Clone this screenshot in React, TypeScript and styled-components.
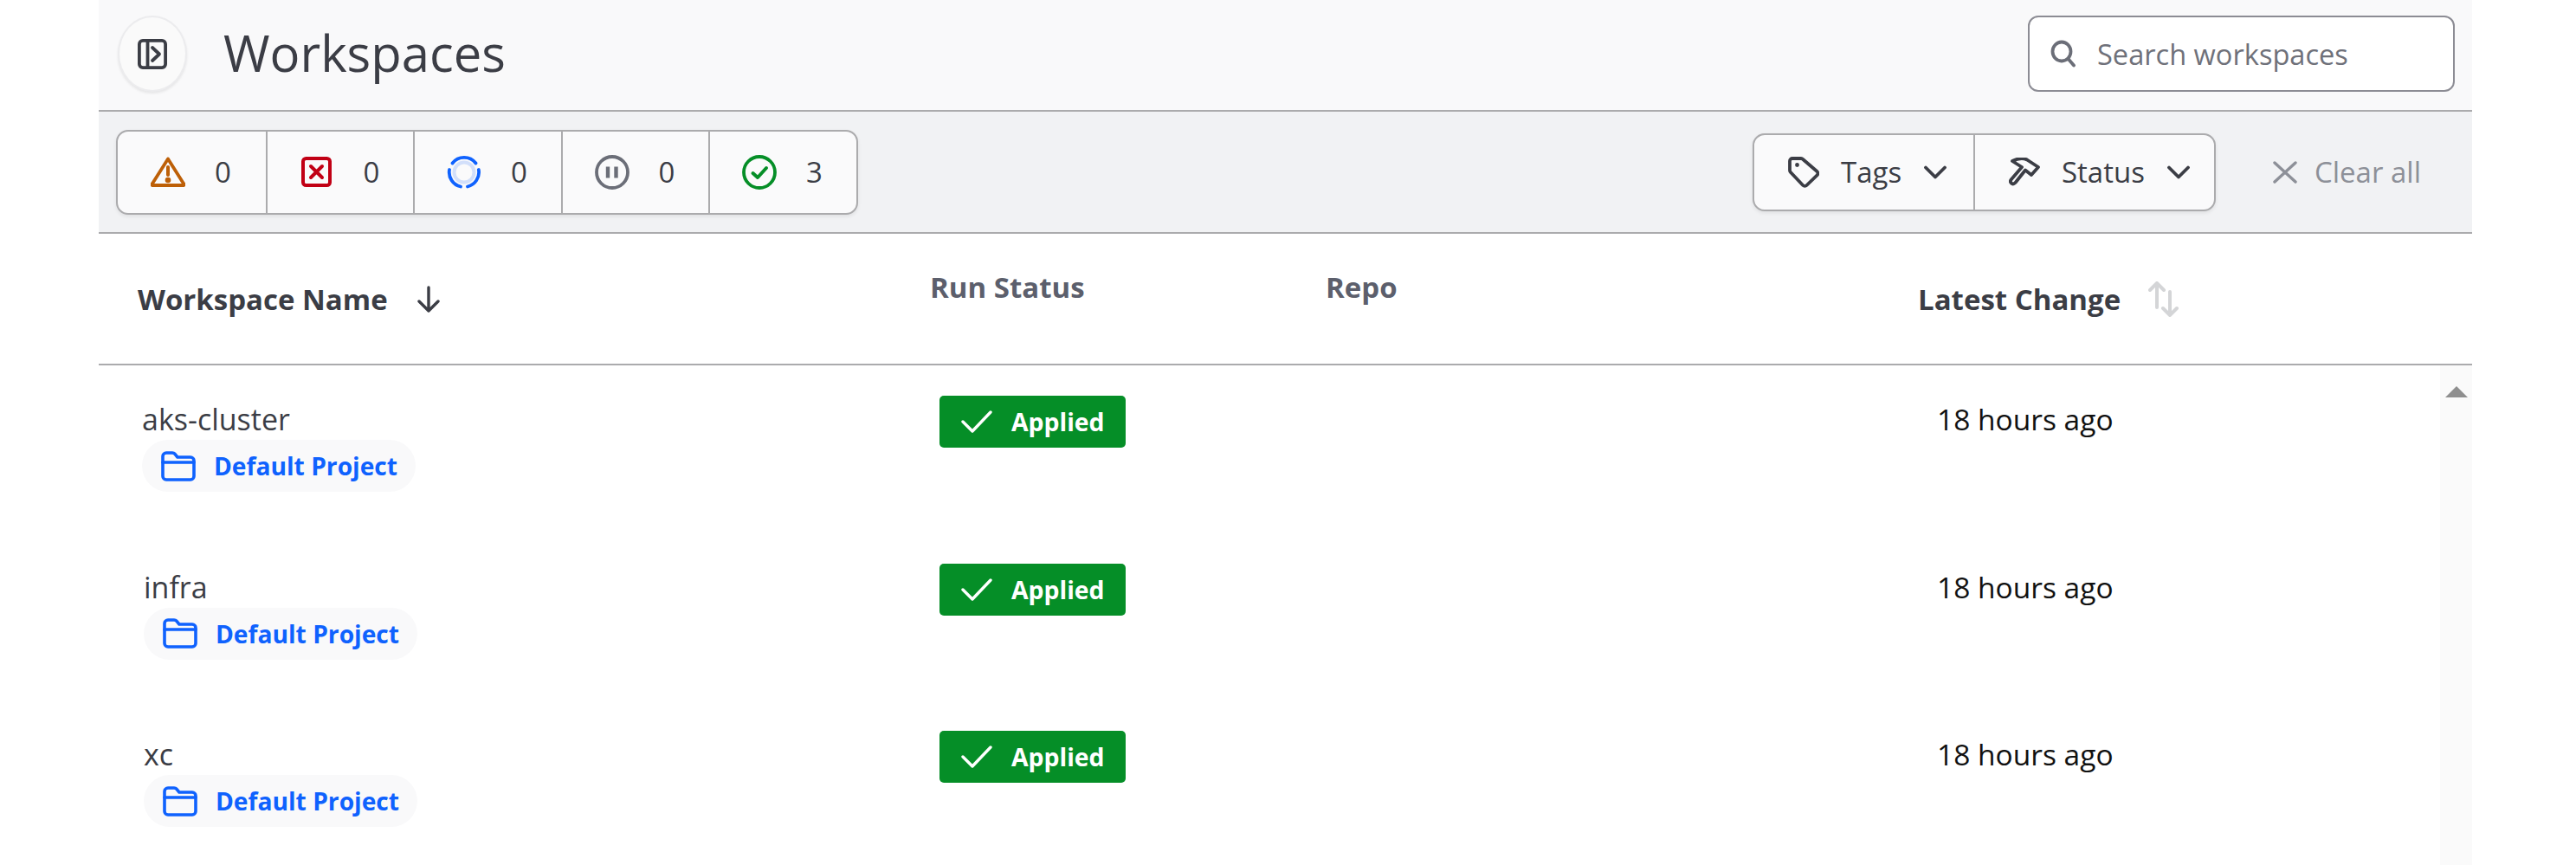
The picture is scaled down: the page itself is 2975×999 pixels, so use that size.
import React from 'react';
import styled, { createGlobalStyle } from 'styled-components';

const Global = createGlobalStyle`
  html, body { margin: 0; padding: 0; background: #fff; }
  body { font-family: "Open Sans", "Noto Sans", "Liberation Sans", sans-serif; color: #3b3d45; }
`;
const Page = styled.div`
  height: 999px;
  overflow: hidden;
  padding: 0 120px 0 114px;
  box-sizing: border-box;
`;
const Header = styled.header`
  height: 129px;
  box-sizing: border-box;
  border-bottom: 2px solid #ababad;
  background: #f9f9fa;
  display: flex;
  align-items: center;
  padding: 0 20px 3px 22px;
`;
const RoundButton = styled.button`
  width: 80px;
  height: 88px;
  padding: 0;
  border: 2px solid #ececee;
  border-radius: 50%;
  background: #fafafa;
  box-shadow: 0 2px 3px rgba(0,0,0,.08);
  display: flex;
  align-items: center;
  justify-content: center;
`;
const Title = styled.h1`
  margin: -2px 0 0 42px;
  font-size: 58px;
  line-height: 72px;
  font-weight: 500;
  color: #3b3d45;
  flex: 1;
`;
const SearchBox = styled.div`
  width: 493px;
  height: 88px;
  box-sizing: border-box;
  border: 2px solid #8c8c94;
  border-radius: 12px;
  background: #fff;
  display: flex;
  align-items: center;
  gap: 24px;
  padding-left: 24px;
  font-size: 32.6px;
  color: #6f717a;
`;
const FilterBar = styled.div`
  height: 141px;
  box-sizing: border-box;
  border-bottom: 2px solid #ababad;
  background: #f1f2f4;
  display: flex;
  align-items: center;
  justify-content: space-between;
  padding: 0 59px 0 20px;
`;
const Group = styled.div<{ $height: number }>`
  display: flex;
  height: ${p => p.$height}px;
  box-sizing: border-box;
  border: 2px solid #ababad;
  border-radius: 14px;
  background: #fafafb;
  box-shadow: 0 2px 4px rgba(0,0,0,.08);
`;
const CountCell = styled.div`
  width: 170.5px;
  box-sizing: border-box;
  display: flex;
  align-items: center;
  gap: 33px;
  padding-left: 37px;
  font-size: 33px;
  color: #3b3d45;
  & + & { border-left: 2px solid #ababad; padding-left: 36px; }
`;
const RightSide = styled.div`
  display: flex;
  align-items: center;
  gap: 66px;
`;
const DropCell = styled.div<{ $width: number }>`
  width: ${p => p.$width}px;
  box-sizing: border-box;
  display: flex;
  align-items: center;
  padding-left: 39px;
  font-size: 33px;
  color: #3b3d45;
  & + & { border-left: 2px solid #ababad; }
  & > span { margin: 0 26px 0 25px; }
`;
const ClearAll = styled.div`
  display: flex;
  align-items: center;
  gap: 20px;
  font-size: 33px;
  color: #8d9098;
`;
const HeadRow = styled.div`
  height: 152px;
  box-sizing: border-box;
  border-bottom: 2px solid #ababad;
  display: grid;
  grid-template-columns: 960px 457px 684px 1fr;
  padding-top: 40px;
`;
const HeadCell = styled.div<{ $muted?: boolean }>`
  display: flex;
  align-items: center;
  align-self: start;
  height: 70px;
  font-size: 33px;
  font-weight: 700;
  color: ${p => (p.$muted ? '#5c5f6c' : '#3b3d45')};
  margin-top: ${p => (p.$muted ? '-14px' : '0')};
`;
const NameHead = styled(HeadCell)`
  padding-left: 45px;
  gap: 34px;
`;
const SortHead = styled(HeadCell)`
  gap: 32px;
`;
const Body = styled.div`
  display: flex;
  height: 577px;
`;
const Rows = styled.div`
  flex: 1;
`;
const Row = styled.div`
  height: 193.5px;
  display: grid;
  grid-template-columns: 960px 457px 684px 1fr;
  padding-top: 38px;
  box-sizing: border-box;
`;
const NameCell = styled.div<{ $first?: boolean }>`
  padding-left: ${p => (p.$first ? 50 : 52)}px;
`;
const Name = styled.div`
  font-size: 34px;
  line-height: 48px;
  color: #3b3d45;
`;
const ProjectPill = styled.div`
  display: inline-flex;
  align-items: center;
  gap: 21px;
  height: 60px;
  padding: 0 21px 0 22px;
  border-radius: 30px;
  background: #f9f9fa;
  font-size: 28.2px;
  font-weight: 700;
  color: #0f62fe;
`;
const StatusCell = styled.div`
  padding-left: 11px;
  grid-column: 2 / 4;
  margin-top: -3px;
`;
const Badge = styled.div`
  display: inline-flex;
  align-items: center;
  gap: 22px;
  width: 215px;
  height: 60px;
  box-sizing: border-box;
  padding-left: 25px;
  border-radius: 5px;
  background: #058e27;
  color: #fff;
  font-size: 28.4px;
  font-weight: 700;
`;
const TimeCell = styled.div`
  padding-left: 22px;
  font-size: 33.5px;
  line-height: 48px;
  color: #111;
`;
const Scrollbar = styled.div`
  width: 37px;
  flex: none;
  background: #fafafa;
  display: flex;
  justify-content: center;
  padding-top: 24px;
  box-sizing: border-box;
`;
const ScrollArrow = styled.div`
  width: 0;
  height: 0;
  border-left: 13px solid transparent;
  border-right: 13px solid transparent;
  border-bottom: 13px solid #8f8f8f;
`;

const SidebarIcon = () => (
  <svg width="34" height="35" viewBox="0 0 34 35" fill="none" stroke="#3b3d45" strokeWidth="3.8" strokeLinecap="round" strokeLinejoin="round">
    <rect x="1.9" y="1.9" width="30.2" height="31.2" rx="4" />
    <path d="M11.5 2v31M17 10l8 7.5-8 7.5" />
  </svg>
);
const SearchIcon = () => (
  <svg width="30" height="32" viewBox="0 0 30 32" fill="none" stroke="#6b6e78" strokeWidth="3.8" strokeLinecap="round">
    <ellipse cx="13" cy="13.5" rx="10.5" ry="11" />
    <path d="M21 22.5l6 7" />
  </svg>
);
const IconBox = styled.span`
  width: 42px;
  flex: none;
  display: flex;
  justify-content: center;
`;
const WarnIcon = () => (
  <svg width="40" height="35" viewBox="0 0 40 35" fill="none" stroke="#bd5f07" strokeWidth="3.8" strokeLinejoin="round" strokeLinecap="round">
    <path d="M20 2.4L38 31a1 1 0 0 1-1 2H3a1 1 0 0 1-1-2z" />
    <path d="M20 12v9" strokeWidth="4" />
    <circle cx="20" cy="27" r="1.4" fill="#bd5f07" />
  </svg>
);
const ErrorIcon = () => (
  <svg width="35" height="35" viewBox="0 0 35 35" fill="none" stroke="#c10015" strokeWidth="4" strokeLinecap="round">
    <rect x="2" y="2" width="31" height="31" rx="3.5" />
    <path d="M11 11l13 13M24 11L11 24" />
  </svg>
);
const SpinnerIcon = () => (
  <svg width="40" height="40" viewBox="0 0 40 40" fill="none" strokeLinecap="round">
    <circle cx="20" cy="20" r="11.5" stroke="#d2dffa" strokeWidth="4" />
    <path d="M6.5 9.5A17 17 0 0 1 33.5 9.5M36.8 17A17 17 0 0 1 24 36.5M16 36.5A17 17 0 0 1 3 17" stroke="#0f62fe" strokeWidth="3.8" />
  </svg>
);
const PauseIcon = () => (
  <svg width="40" height="40" viewBox="0 0 40 40" fill="none" stroke="#6b6e78" strokeWidth="3.8">
    <circle cx="20" cy="20" r="18" />
    <path d="M15 13.5v13M24.5 13.5v13" strokeWidth="4.4" />
  </svg>
);
const OkIcon = () => (
  <svg width="40" height="40" viewBox="0 0 40 40" fill="none" stroke="#058e27" strokeWidth="3.8" strokeLinecap="round" strokeLinejoin="round">
    <circle cx="20" cy="20" r="18" />
    <path d="M12.5 21l5.5 5 10-11" strokeWidth="4" />
  </svg>
);
const TagIcon = () => (
  <svg width="36" height="36" viewBox="0 0 36 36" fill="none" stroke="#3b3d45" strokeWidth="3.8" strokeLinejoin="round">
    <path d="M2 5a3 3 0 0 1 3-3h10a3 3 0 0 1 2.2 1L33.5 17a3 3 0 0 1 0 4.3L21.5 33a3 3 0 0 1-4.3 0L3 18a3 3 0 0 1-1-2.3z" />
    <circle cx="10.5" cy="9.5" r="2.4" fill="#3b3d45" stroke="none" />
  </svg>
);
const HammerIcon = () => (
  <svg width="36" height="33" viewBox="0 0 36 33" fill="none" stroke="#3b3d45" strokeWidth="3.8" strokeLinejoin="round" strokeLinecap="round">
    <path d="M4 4C10 1 16 0 21 2.5L34 11 26 20 19 14.5 7.5 29Q5 31.5 2.8 29.5 0.8 27.5 3 25L15 11Z" />
  </svg>
);
const Chevron = () => (
  <svg width="26" height="16" viewBox="0 0 26 16" fill="none" stroke="#3b3d45" strokeWidth="3.8" strokeLinecap="round" strokeLinejoin="round">
    <path d="M2 2.5l11 11 11-11" />
  </svg>
);
const CloseIcon = () => (
  <svg width="28" height="26" viewBox="0 0 28 26" fill="none" stroke="#8d9098" strokeWidth="3.4" strokeLinecap="round">
    <path d="M2 2l24 22M26 2L2 24" />
  </svg>
);
const ArrowDown = () => (
  <svg width="26" height="31" viewBox="0 0 26 31" fill="none" stroke="#3b3d45" strokeWidth="3.4" strokeLinecap="round" strokeLinejoin="round">
    <path d="M13 2v27M2 18l11 11 11-11" />
  </svg>
);
const SortIcon = () => (
  <svg width="35" height="41" viewBox="0 0 35 41" fill="none" stroke="#d4d5d7" strokeWidth="4" strokeLinecap="round" strokeLinejoin="round">
    <path d="M10 2v28M2 10l8-8 8 8M25 12v27M17 31l8 8 8-8" />
  </svg>
);
const FolderIcon = () => (
  <svg width="40" height="35" viewBox="0 0 40 35" fill="none" stroke="#0f62fe" strokeWidth="3.6" strokeLinejoin="round" strokeLinecap="round">
    <path d="M2 6a4 4 0 0 1 4-4h7a4 4 0 0 1 3 1.3L19 7h15a4 4 0 0 1 4 4v18a4 4 0 0 1-4 4H6a4 4 0 0 1-4-4z" />
    <path d="M2 13h36" />
  </svg>
);
const CheckMark = () => (
  <svg width="36" height="26" viewBox="0 0 36 26" fill="none" stroke="#fff" strokeWidth="3.4" strokeLinecap="round" strokeLinejoin="round">
    <path d="M2 13l11 11L34 2" />
  </svg>
);

const counts = [
  { icon: <WarnIcon />, n: 0 },
  { icon: <ErrorIcon />, n: 0 },
  { icon: <SpinnerIcon />, n: 0 },
  { icon: <PauseIcon />, n: 0 },
  { icon: <OkIcon />, n: 3 },
];
const workspaces = ['aks-cluster', 'infra', 'xc'];

export default function App() {
  return (
    <Page>
      <Global />
      <Header>
        <RoundButton><SidebarIcon /></RoundButton>
        <Title>Workspaces</Title>
        <SearchBox><SearchIcon />Search workspaces</SearchBox>
      </Header>
      <FilterBar>
        <Group $height={98}>
          {counts.map((c, i) => (
            <CountCell key={i}>
              <IconBox>{c.icon}</IconBox>
              {c.n}
            </CountCell>
          ))}
        </Group>
        <RightSide>
          <Group $height={90}>
            <DropCell $width={253}><TagIcon /><span>Tags</span><Chevron /></DropCell>
            <DropCell $width={278}><HammerIcon /><span>Status</span><Chevron /></DropCell>
          </Group>
          <ClearAll><CloseIcon />Clear all</ClearAll>
        </RightSide>
      </FilterBar>
      <HeadRow>
        <NameHead>Workspace Name<ArrowDown /></NameHead>
        <HeadCell $muted>Run Status</HeadCell>
        <HeadCell $muted>Repo</HeadCell>
        <SortHead>Latest Change<SortIcon /></SortHead>
      </HeadRow>
      <Body>
        <Rows>
          {workspaces.map((w, i) => (
            <Row key={w}>
              <NameCell $first={i === 0}>
                <Name>{w}</Name>
                <ProjectPill><FolderIcon />Default Project</ProjectPill>
              </NameCell>
              <StatusCell><Badge><CheckMark />Applied</Badge></StatusCell>
              <TimeCell>18 hours ago</TimeCell>
            </Row>
          ))}
        </Rows>
        <Scrollbar><ScrollArrow /></Scrollbar>
      </Body>
    </Page>
  );
}
